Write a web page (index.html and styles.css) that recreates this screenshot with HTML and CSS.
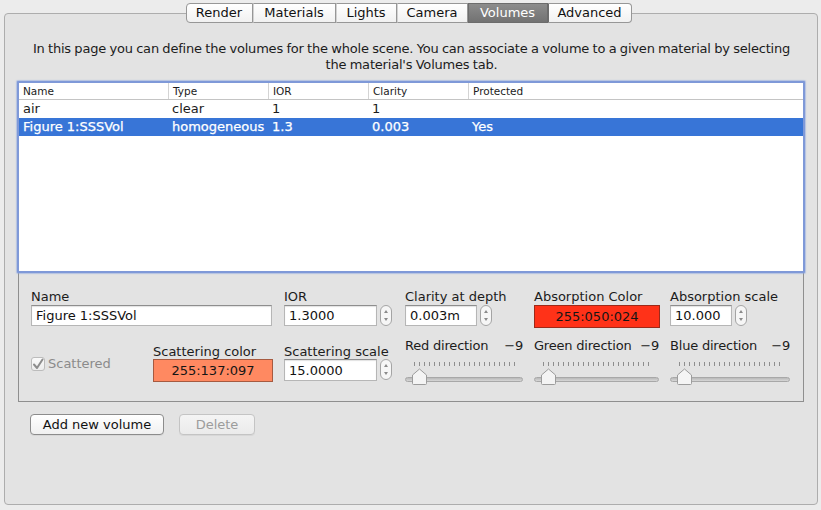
FILE: index.html
```html
<!DOCTYPE html>
<html>
<head>
<meta charset="utf-8">
<link rel="stylesheet" href="styles.css">
</head>
<body>
<div class="window">
  <div class="tabs">
    <div class="tab t-render">Render</div>
    <div class="tab t-materials">Materials</div>
    <div class="tab t-lights">Lights</div>
    <div class="tab t-camera">Camera</div>
    <div class="tab t-volumes selected">Volumes</div>
    <div class="tab t-advanced">Advanced</div>
  </div>
  <div class="pane">
    <p class="desc">In this page you can define the volumes for the whole scene. You can associate a volume to a given material by selecting<br>the material's Volumes tab.</p>
    <div class="table">
      <div class="row head">
        <div class="cell">Name</div>
        <div class="cell">Type</div>
        <div class="cell">IOR</div>
        <div class="cell">Clarity</div>
        <div class="cell">Protected</div>
      </div>
      <div class="row">
        <div class="cell">air</div>
        <div class="cell">clear</div>
        <div class="cell">1</div>
        <div class="cell">1</div>
        <div class="cell"></div>
      </div>
      <div class="row sel">
        <div class="cell">Figure 1:SSSVol</div>
        <div class="cell">homogeneous</div>
        <div class="cell">1.3</div>
        <div class="cell">0.003</div>
        <div class="cell">Yes</div>
      </div>
    </div>
    <div class="panel">
      <div class="field f-name">
        <div class="label">Name</div>
        <div class="input w-name">Figure 1:SSSVol</div>
      </div>
      <div class="field f-ior">
        <div class="label">IOR</div>
        <div class="ctl">
          <div class="input w-ior">1.3000</div>
          <div class="stepper"><svg width="12" height="21" viewBox="0 0 12 21"><rect x="0.5" y="0.5" width="11" height="20" rx="5.5" fill="#f6f6f6" stroke="#a4a4a4"/><path d="M4 8 L6 5 L8 8 Z" fill="#8a8a8a"/><path d="M4 13 L6 16 L8 13 Z" fill="#8a8a8a"/></svg></div>
        </div>
      </div>
      <div class="field f-clar">
        <div class="label">Clarity at depth</div>
        <div class="ctl">
          <div class="input w-clar">0.003m</div>
          <div class="stepper"><svg width="12" height="21" viewBox="0 0 12 21"><rect x="0.5" y="0.5" width="11" height="20" rx="5.5" fill="#f6f6f6" stroke="#a4a4a4"/><path d="M4 8 L6 5 L8 8 Z" fill="#8a8a8a"/><path d="M4 13 L6 16 L8 13 Z" fill="#8a8a8a"/></svg></div>
        </div>
      </div>
      <div class="field f-abc">
        <div class="label">Absorption Color</div>
        <div class="swatch sw-abs">255:050:024</div>
      </div>
      <div class="field f-abs">
        <div class="label">Absorption scale</div>
        <div class="ctl">
          <div class="input w-abs">10.000</div>
          <div class="stepper"><svg width="12" height="21" viewBox="0 0 12 21"><rect x="0.5" y="0.5" width="11" height="20" rx="5.5" fill="#f6f6f6" stroke="#a4a4a4"/><path d="M4 8 L6 5 L8 8 Z" fill="#8a8a8a"/><path d="M4 13 L6 16 L8 13 Z" fill="#8a8a8a"/></svg></div>
        </div>
      </div>

      <div class="field f-chk">
        <div class="check">
          <span class="box"><svg width="14" height="14" viewBox="0 0 14 14"><path d="M3 7.5 L6 11 L11.5 2.5" fill="none" stroke="#8d8d8d" stroke-width="2" stroke-linecap="round" stroke-linejoin="round"/></svg></span>
          <span class="chk-label">Scattered</span>
        </div>
      </div>
      <div class="field f-scc">
        <div class="label">Scattering color</div>
        <div class="swatch sw-sc">255:137:097</div>
      </div>
      <div class="field f-scs">
        <div class="label">Scattering scale</div>
        <div class="ctl">
          <div class="input w-ior">15.0000</div>
          <div class="stepper"><svg width="12" height="21" viewBox="0 0 12 21"><rect x="0.5" y="0.5" width="11" height="20" rx="5.5" fill="#f6f6f6" stroke="#a4a4a4"/><path d="M4 8 L6 5 L8 8 Z" fill="#8a8a8a"/><path d="M4 13 L6 16 L8 13 Z" fill="#8a8a8a"/></svg></div>
        </div>
      </div>
      <div class="field slider s-red">
        <div class="slabel"><span>Red direction</span><span>−9</span></div>
        <div class="ticks"></div>
        <div class="track"><svg class="thumb" width="17" height="18" viewBox="0 0 17 18"><path d="M1.5 7 L8.5 1 L15.5 7 L15.5 15.5 Q15.5 16.5 14.5 16.5 L2.5 16.5 Q1.5 16.5 1.5 15.5 Z" fill="#f4f4f4" stroke="#9c9c9c"/></svg></div>
      </div>
      <div class="field slider s-green">
        <div class="slabel"><span>Green direction</span><span>−9</span></div>
        <div class="ticks"></div>
        <div class="track"><svg class="thumb" width="17" height="18" viewBox="0 0 17 18"><path d="M1.5 7 L8.5 1 L15.5 7 L15.5 15.5 Q15.5 16.5 14.5 16.5 L2.5 16.5 Q1.5 16.5 1.5 15.5 Z" fill="#f4f4f4" stroke="#9c9c9c"/></svg></div>
      </div>
      <div class="field slider s-blue">
        <div class="slabel"><span>Blue direction</span><span>−9</span></div>
        <div class="ticks"></div>
        <div class="track"><svg class="thumb" width="17" height="18" viewBox="0 0 17 18"><path d="M1.5 7 L8.5 1 L15.5 7 L15.5 15.5 Q15.5 16.5 14.5 16.5 L2.5 16.5 Q1.5 16.5 1.5 15.5 Z" fill="#f4f4f4" stroke="#9c9c9c"/></svg></div>
      </div>
    </div>
    <div class="buttons">
      <div class="btn b-add">Add new volume</div>
      <div class="btn b-del disabled">Delete</div>
    </div>
  </div>
</div>
</body>
</html>
```
FILE: styles.css
```css
html, body {
  margin: 0;
  padding: 0;
}
body {
  width: 821px;
  height: 510px;
  overflow: hidden;
  background: #ececec;
  font-family: "DejaVu Sans", "Liberation Sans", sans-serif;
  font-size: 13px;
  color: #1c1c1c;
}
.window {
  padding: 3px 4px 0 4px;
}
.tabs {
  display: flex;
  justify-content: center;
  height: 20px;
  position: relative;
  z-index: 1;
  padding-right: 4px;
}
.tab {
  box-sizing: border-box;
  height: 20px;
  line-height: 18px;
  text-align: center;
  border: 1px solid #979797;
  border-left: 1px solid #d2d2d2;
  background: linear-gradient(#ffffff, #f1f1f1);
  color: #111;
}
.tab:first-child {
  border-left: 1px solid #979797;
  border-radius: 4px 0 0 4px;
}
.tab:last-child {
  border-radius: 0 4px 4px 0;
}
.tab.selected {
  background: linear-gradient(#8c8c8c, #727272);
  border-color: #6c6c6c;
  color: #fff;
}
.tab.selected + .tab {
  border-left-color: #6c6c6c;
}
.t-render { width: 67px; }
.t-materials { width: 83px; }
.t-lights { width: 61px; }
.t-camera { width: 71px; }
.t-volumes { width: 80px; }
.t-advanced { width: 84px; }

.pane {
  box-sizing: border-box;
  margin-top: -10px;
  height: 492px;
  width: 814px;
  border: 1px solid #adadad;
  border-radius: 4px;
  background: #e3e3e3;
  padding: 0 11px 0 12px;
}
.desc {
  margin: 27px -12px 8px;
  line-height: 16px;
  text-align: center;
  white-space: nowrap;
  letter-spacing: -0.2px;
  word-spacing: -0.5px;
  color: #1c1c1c;
}
.table {
  box-sizing: border-box;
  width: 788px;
  height: 192px;
  background: #fff;
  border: 2px solid #7f99d8;
  box-shadow: 0 0 1px 1px rgba(140, 165, 225, 0.55);
  border-radius: 1px;
  position: relative;
  z-index: 1;
}
.row {
  display: grid;
  grid-template-columns: 149px 100px 100px 100px 1fr;
  height: 18px;
  line-height: 18px;
}
.row.head {
  height: 17px;
  line-height: 15px;
  font-size: 10.5px;
  border-bottom: 1px solid #c4c4c4;
  box-sizing: border-box;
  color: #1c1c1c;
}
.row.head .cell + .cell {
  border-left: 1px solid #d4d4d4;
}
.row.head .cell {
  padding-top: 1px;
}
.row .cell + .cell {
  padding-left: 4px;
}
.cell {
  padding-left: 4px;
  white-space: nowrap;
  overflow: hidden;
}
.row.sel {
  background: #3875d7;
  color: #fff;
  -webkit-text-stroke: 0.25px #fff;
}

.panel {
  box-sizing: border-box;
  width: 786px;
  height: 129px;
  margin-left: 1px;
  border: 1px solid #8f8f8f;
  border-top: none;
  padding: 16px 0 0 12px;
  display: grid;
  grid-template-columns: 122px 131px 121px 129px 136px 120px;
  grid-template-rows: 37px 40px;
  row-gap: 18px;
}
.field {
  display: flex;
  flex-direction: column;
}
.label {
  line-height: 15px;
  height: 15px;
  margin-bottom: 1px;
  white-space: nowrap;
}
.f-name { grid-column: 1 / 3; grid-row: 1; }
.f-ior { grid-column: 3; grid-row: 1; }
.f-clar { grid-column: 4; grid-row: 1; }
.f-abc { grid-column: 5; grid-row: 1; }
.f-abs { grid-column: 6; grid-row: 1; }
.f-chk { grid-column: 1; grid-row: 2; }
.f-scc { grid-column: 2; grid-row: 2; }
.f-scs { grid-column: 3; grid-row: 2; }
.s-red { grid-column: 4; grid-row: 2; }
.s-green { grid-column: 5; grid-row: 2; }
.s-blue { grid-column: 6; grid-row: 2; }

.ctl {
  display: flex;
  align-items: flex-start;
  gap: 3px;
}
.input {
  box-sizing: border-box;
  height: 21px;
  line-height: 20px;
  background: #fff;
  border: 1px solid #b6b6b6;
  border-top-color: #8e8e8e;
  box-shadow: inset 0 1px 1px rgba(0, 0, 0, 0.12);
  padding-left: 4px;
  color: #111;
  white-space: nowrap;
}
.w-name { width: 241px; }
.w-ior { width: 93px; }
.w-clar { width: 72px; }
.w-abs { width: 62px; }
.f-scs .input { height: 22px; line-height: 21px; }
.stepper {
  width: 12px;
  height: 21px;
}
.stepper svg { display: block; }
.swatch {
  box-sizing: border-box;
  height: 23px;
  line-height: 21px;
  text-align: center;
  color: #151515;
  border: 1px solid rgba(0, 0, 0, 0.45);
}
.sw-abs {
  width: 126px;
  background: rgb(255, 50, 24);
  border-color: #9c2a1a;
}
.sw-sc {
  width: 120px;
  background: rgb(255, 137, 97);
  border-color: #a65a40;
}
.f-scc .label, .f-scs .label { margin-bottom: 0; }

.check {
  display: flex;
  align-items: center;
  gap: 3px;
  margin-top: 12px;
}
.box {
  box-sizing: border-box;
  width: 14px;
  height: 14px;
  border: 1px solid #bcbcbc;
  border-radius: 3px;
  background: linear-gradient(#fafafa, #ececec);
  display: flex;
}
.box svg { display: block; margin: -1px; }
.chk-label { color: #8b8b8b; }

.slider {
  margin-top: -6px;
}
.s-red { width: 118px; }
.s-green { width: 125px; }
.s-blue { width: 120px; }
.slabel {
  display: flex;
  justify-content: space-between;
  line-height: 15px;
  height: 15px;
  letter-spacing: -0.2px;
}
.ticks {
  margin: 9px 0 0 9px;
  width: 101px;
  height: 4px;
  background: repeating-linear-gradient(to right, #8e8e8e 0, #8e8e8e 1px, transparent 1px, transparent 5px);
}
.s-green .ticks { width: 106px; }
.s-blue .ticks { width: 103px; }
.track {
  position: relative;
  box-sizing: border-box;
  margin-top: 11px;
  height: 5px;
  border: 1px solid #a8a8a8;
  border-radius: 3px;
  background: linear-gradient(#b9b9b9, #d6d6d6);
}
.thumb {
  position: absolute;
  left: 5px;
  top: -10px;
}

.buttons {
  display: flex;
  gap: 15px;
  margin: 12px 0 0 13px;
}
.btn {
  box-sizing: border-box;
  height: 21px;
  line-height: 19px;
  text-align: center;
  border: 1px solid #8c8c8c;
  border-radius: 4px;
  background: linear-gradient(#ffffff, #f0f0f0);
  color: #111;
  box-shadow: 0 1px 0 rgba(0, 0, 0, 0.05);
}
.b-add { width: 134px; }
.b-del { width: 76px; }
.btn.disabled {
  color: #9c9c9c;
  border-color: #c4c4c4;
  background: linear-gradient(#f4f4f4, #ebebeb);
}
```
